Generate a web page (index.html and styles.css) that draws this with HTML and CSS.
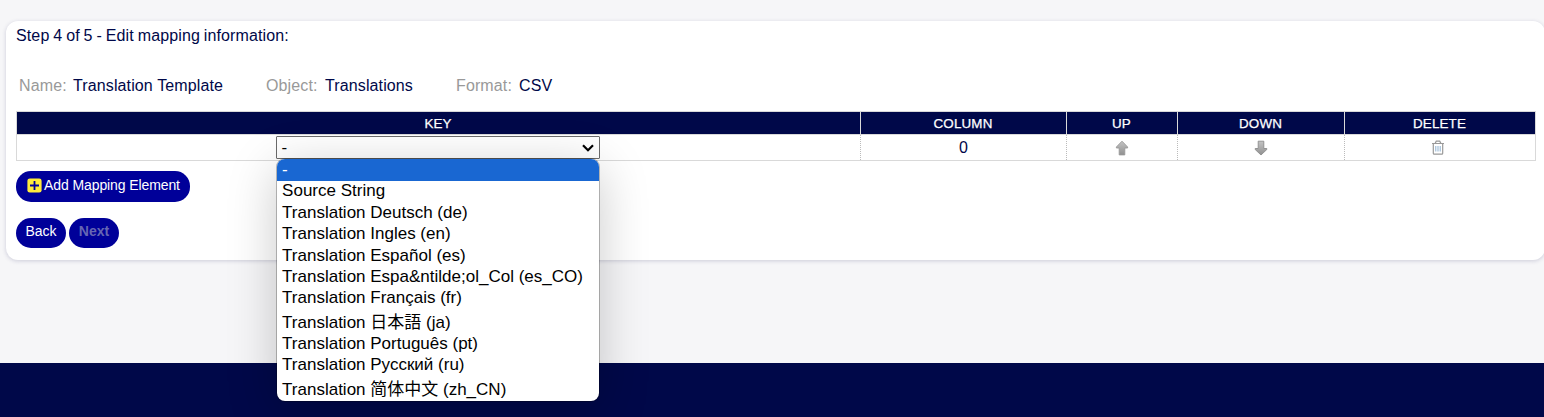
FILE: index.html
```html
<!DOCTYPE html>
<html lang="en">
<head>
<meta charset="utf-8">
<title>Edit mapping information</title>
<link rel="stylesheet" href="styles.css">
</head>
<body>
<main class="card">
  <h1 class="step"><span>Step 4 of 5 - Edit mapping information:</span></h1>
  <div class="meta">
    <div class="field name"><span class="label">Name:</span><span class="value">Translation Template</span></div>
    <div class="field object"><span class="label">Object:</span><span class="value">Translations</span></div>
    <div class="field format"><span class="label">Format:</span><span class="value">CSV</span></div>
  </div>
  <div class="table">
    <div class="row head">
      <div class="cell">KEY</div><div class="cell">COLUMN</div><div class="cell">UP</div><div class="cell">DOWN</div><div class="cell">DELETE</div>
    </div>
    <div class="row body">
      <div class="cell key">
        <div class="select">
          <span>-</span>
          <svg class="chevron" width="12" height="8" viewBox="0 0 12 8"><path d="M1 1.2 6 6.2 11 1.2" fill="none" stroke="#000" stroke-width="2.2"/></svg>
          <ul class="options">
            <li class="selected">-</li>
            <li>Source String</li>
            <li>Translation Deutsch (de)</li>
            <li>Translation Ingles (en)</li>
            <li>Translation Español (es)</li>
            <li>Translation Espa&amp;ntilde;ol_Col (es_CO)</li>
            <li>Translation Français (fr)</li>
            <li class="tall" lang="ja">Translation 日本語 (ja)</li>
            <li>Translation Português (pt)</li>
            <li>Translation Русский (ru)</li>
            <li class="tall" lang="zh-CN">Translation 简体中文 (zh_CN)</li>
          </ul>
        </div>
      </div>
      <div class="cell">0</div>
      <div class="cell"><svg class="arrow" width="14" height="16" viewBox="0 0 14 16"><defs><linearGradient id="g" x1="0" y1="0" x2="0" y2="1"><stop offset="0" stop-color="#c4c4c4"/><stop offset="1" stop-color="#909090"/></linearGradient></defs><path d="M7 1.2 12.6 7v1H9.8v6.9H4.2V8H1.4V7z" fill="url(#g)" stroke="#999" stroke-width=".9" stroke-linejoin="round"/></svg></div>
      <div class="cell"><svg class="arrow" width="14" height="16" viewBox="0 0 14 16"><path d="M7 15 1.2 9.5v-1h3V1.2h5.6v7.3h3v1z" fill="url(#g)" stroke="#8c8c8c" stroke-width=".9" stroke-linejoin="round"/></svg></div>
      <div class="cell delete"><svg class="trash" width="14" height="16" viewBox="0 0 14 16"><path d="M1 3.5h12M4.2 3.1 5.3 1.2h3.4l1.1 1.9M2.3 4v9.3q0 .9.9.9h7.6q.9 0 .9-.9V4" fill="none" stroke="#999" stroke-width="1.2"/><path d="M4.8 6v5.5M7 6v5.5M9.2 6v5.5" stroke="#8fb2d2" stroke-width="1"/></svg></div>
    </div>
  </div>
  <div class="actions">
    <button class="btn add"><svg width="15" height="15" viewBox="0 0 15 15"><rect x=".4" y=".4" width="14.2" height="14.2" rx="2.4" fill="#ffeb3b"/><path d="M7.5 3v9M3 7.5h9" stroke="#000099" stroke-width="1.8"/></svg><span>Add Mapping Element</span></button>
  </div>
  <div class="actions nav">
    <button class="btn back">Back</button>
    <button class="btn next" disabled>Next</button>
  </div>
</main>
<footer class="footer"></footer>
</body>
</html>
```
FILE: styles.css
```css
* { box-sizing: border-box; }
body {
  margin: 0;
  height: 417px;
  overflow: hidden;
  display: flex;
  flex-direction: column;
  background: #f6f6f8;
  color: #000849;
  font: 16px/20px "Liberation Sans", Arial, "Noto Sans CJK JP", sans-serif;
}
.card {
  height: 239px;
  margin: 21px -1px 0 6px;
  padding: 5px 9px 0 10px;
  background: #fff;
  border-radius: 12px;
  box-shadow: 0 1px 4px rgba(40, 40, 100, .2);
}
.step { margin: 0; font-size: 16px; font-weight: 400; line-height: 20px; letter-spacing: .12px; word-spacing: -.7px; }
.meta { display: flex; height: 20px; margin: 30px 0 15px 3px; white-space: nowrap; letter-spacing: .12px; }
.field { display: flex; }
.label { color: #999; }
.name { width: 247px; }
.name .label { width: 54px; }
.object { width: 190px; }
.object .label { width: 59px; }
.format .label { width: 63px; }
.table { width: 1520px; border: 1px solid #d9d9d9; }
.row { display: grid; grid-template-columns: 843px 206px 111px 167px 191px; }
.cell { display: flex; align-items: center; justify-content: center; }
.head { height: 23px; background: #000849; border-bottom: 1px solid #d9d9d9; color: #fff; font-size: 13.4px; letter-spacing: .15px; -webkit-text-stroke: .25px #fff; }
.head .cell { padding: 2px 1px 0 0; }
.head .cell + .cell { border-left: 1px solid #d9d9d9; }
.body { height: 25px; }
.body .cell + .cell { border-left: 1px dotted #bbb; }
.body .key { padding-right: 2px; }
.body .delete { padding-right: 4px; }
.select {
  position: relative;
  display: flex;
  align-items: center;
  justify-content: space-between;
  width: 324px;
  height: 23px;
  padding: 0 5px;
  border: 1px solid #6b6b6b;
  border-radius: 1px;
  color: #000;
  font-size: 17px;
}
.options {
  position: absolute;
  z-index: 2;
  top: 22px;
  left: 0;
  width: 322px;
  margin: 0;
  padding: 0;
  list-style: none;
  overflow: hidden;
  background: #fff;
  border-radius: 8px;
  box-shadow: 0 0 0 1px rgba(0, 0, 0, .25), 0 10px 50px rgba(0, 0, 0, .22);
  white-space: nowrap;
}
.options li { height: 21.33px; padding-left: 5.6px; line-height: 21px; }
.options li:nth-child(2) { line-height: 19px; }
.options li:nth-child(9), .options li:nth-child(10) { line-height: 20px; }
.options .tall { height: 25px; line-height: 28px; }
.options .tall:lang(zh) { font-family: "Liberation Sans", "Noto Sans CJK SC", sans-serif; }
.options .selected { height: 21.6px; background: #1967d2; color: #fff; }
.actions { display: flex; gap: 3px; margin-top: 10px; }
.nav { margin-top: 16px; }
.btn {
  display: flex;
  align-items: center;
  justify-content: center;
  height: 30px;
  padding: 0 0 4px;
  border: 0;
  border-radius: 15px;
  background: #000099;
  color: #fff;
  font: 14px "Liberation Sans", Arial, sans-serif;
  white-space: nowrap;
}
.add { width: 174px; height: 31px; padding: 0 0 3px 1px; gap: 2px; letter-spacing: -.1px; }
.back, .next { width: 50px; }
.next { color: #6666b3; font-weight: 700; }
.footer { margin-top: 103px; height: 54px; background: #000849; }
```
